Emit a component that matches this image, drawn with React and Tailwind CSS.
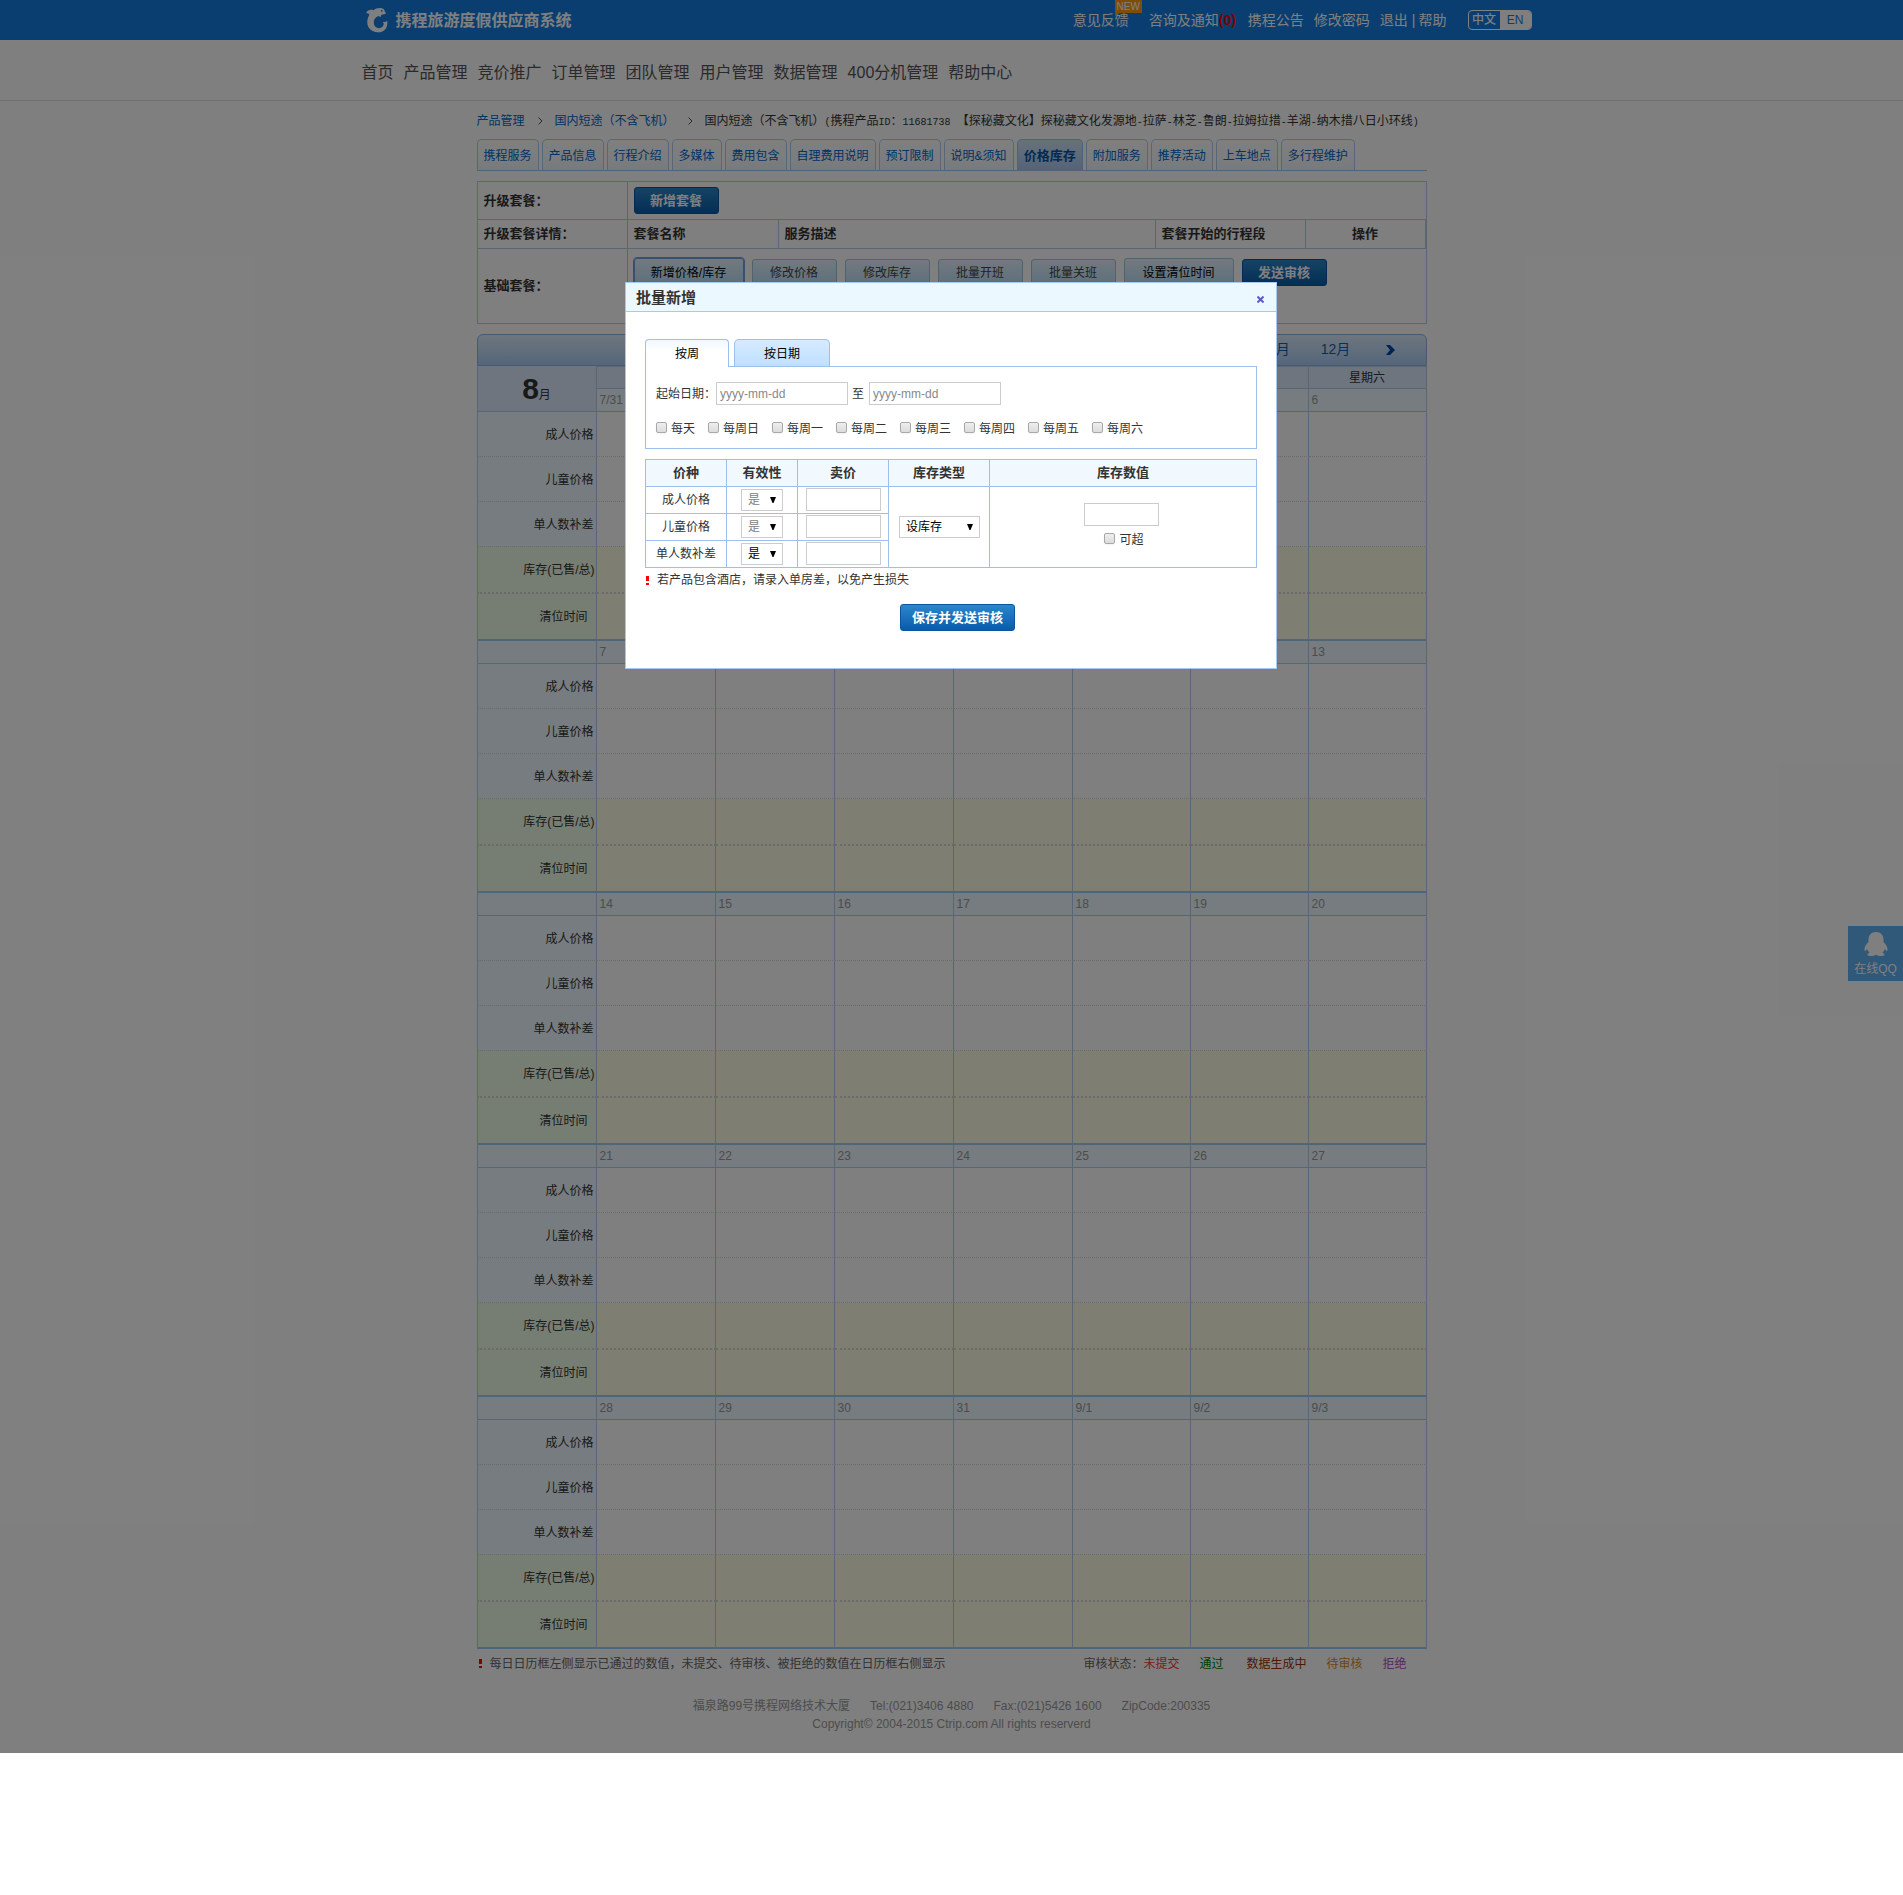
import React from "react";

const topLink = "text-[14px] leading-5 text-white hover:underline";

const menu = ["首页", "产品管理", "竞价推广", "订单管理", "团队管理", "用户管理", "数据管理", "400分机管理", "帮助中心"];

const tabs = [
  "携程服务", "产品信息", "行程介绍", "多媒体", "费用包含", "自理费用说明", "预订限制",
  "说明&须知", "价格库存", "附加服务", "推荐活动", "上车地点", "多行程维护",
];

const weekdays = ["星期日", "星期一", "星期二", "星期三", "星期四", "星期五", "星期六"];

const weeks = [
  ["7/31", "1", "2", "3", "4", "5", "6"],
  ["7", "8", "9", "10", "11", "12", "13"],
  ["14", "15", "16", "17", "18", "19", "20"],
  ["21", "22", "23", "24", "25", "26", "27"],
  ["28", "29", "30", "31", "9/1", "9/2", "9/3"],
];

const line = "border-[#b3cdeb]";

const rows = [
  { label: "成人价格", head: "h-[45px] border-b border-dotted bg-[#ecf8ff] pr-[2px]", cell: "border-b border-dotted" },
  { label: "儿童价格", head: "h-[45px] border-b border-dotted bg-[#ecf8ff] pr-[2px]", cell: "border-b border-dotted" },
  { label: "单人数补差", head: "h-[45px] border-b border-dotted bg-[#ecf8ff] pr-[2px]", cell: "border-b border-dotted" },
  { label: "库存(已售/总)", head: "h-[47px] border-b-2 border-dotted bg-[#ecfae4] pr-px", cell: "border-b-2 border-dotted bg-[#fffde5]" },
  { label: "清位时间", head: "h-[47px] border-b-2 border-b-[#9acdf5] bg-[#ecfae4] pr-2", cell: "border-b-2 border-b-[#9acdf5] bg-[#fffde5]", last: true },
];

function Logo() {
  return (
    <svg width="22" height="25" viewBox="0 0 22 25" className="shrink-0" aria-hidden="true">
      <path
        fill="#fff"
        d="M0 5.300C1 3 2.500 2 4 2C5.500 1.700 6.500 2 7.500 2.200C9 0.800 11.500 0 14 0C17 0 18.600 1.500 18.800 3.500L20 5.300C19 6.500 17 6.500 15.500 6.700C14.800 7.200 15.200 8.200 14.800 9C13.800 8.800 13 8.300 12.300 8C9.800 9 8 11 7.800 13.500C7.500 17 9 19.500 12.300 20.200C15.500 20.500 17.500 18.500 17.800 15.800L16.800 14C18.500 14.300 20 14 21.300 13C21.300 16 21.500 18.500 19.500 21C17.500 23.700 14.500 24.600 11.300 24.300C5.500 23.800 1.500 20 1.300 15C1.200 11.500 2 9 3.500 6.500C2.500 5.500 1.500 5.200 0 5.300Z"
      />
      <circle cx="15.700" cy="2.800" r="0.900" fill="#147ce0" />
    </svg>
  );
}

function Header() {
  return (
    <header>
      <div className="h-10 bg-[#147ce0]">
        <div className="mx-auto flex h-10 max-w-[1180px] items-center justify-between">
          <a href="#home" className="flex items-center gap-2 pl-1 pt-px text-[16px] font-bold text-white">
            <Logo />
            携程旅游度假供应商系统
          </a>
          <nav className="flex items-center pr-[10px]" aria-label="账户">
            <a href="#feedback" className={`${topLink} relative`}>
              意见反馈
              <span className="absolute -top-[10px] left-[42px] flex h-[13px] w-[27px] items-center justify-center bg-[#ff9a10] text-[10px] leading-none">
                NEW
                <svg className="absolute left-0 top-[13px]" width="4" height="3" viewBox="0 0 4 3" aria-hidden="true">
                  <path d="M0 0h4L0 3z" fill="#ff9a10" />
                </svg>
              </span>
            </a>
            <a href="#notice" className={`${topLink} ml-5`}>
              咨询及通知<b className="text-[#f00]">(0)</b>
            </a>
            <a href="#bulletin" className={`${topLink} ml-3`}>携程公告</a>
            <a href="#password" className={`${topLink} ml-[10px]`}>修改密码</a>
            <a href="#logout" className={`${topLink} ml-[10px]`}>退出</a>
            <span className="ml-1 mr-[3px] text-[14px] leading-5 text-white">|</span>
            <a href="#help" className={topLink}>帮助</a>
            <span className="ml-[21px] flex h-5 w-16 overflow-hidden rounded-[4px] border border-white text-[12px] font-medium leading-[18px]">
              <button type="button" className="w-8 text-white">中文</button>
              <button type="button" className="w-8 bg-white text-[#147ce0]">EN</button>
            </span>
          </nav>
        </div>
      </div>
      <div className="h-[61px] border-b border-[#d5e0ea]">
        <nav className="mx-auto flex h-[65px] max-w-[1180px] items-center gap-[10px]" aria-label="主菜单">
          {menu.map((m) => (
            <a key={m} href={`#${m}`} className="text-[16px] leading-6 text-[#555]">{m}</a>
          ))}
        </nav>
      </div>
    </header>
  );
}

function Half({ children }) {
  return <span className="font-['Liberation_Mono',monospace] text-[10px]">{children}</span>;
}

function Chevron() {
  return (
    <svg width="5" height="8" viewBox="0 0 5 8" className="ml-[13px] mr-3 shrink-0" fill="none" stroke="#555" aria-hidden="true">
      <path d="M0.500 0.500L4 4L0.500 7.500" />
    </svg>
  );
}

function Breadcrumb() {
  return (
    <nav className="flex h-[38px] items-center whitespace-nowrap pt-px text-[12px] text-[#333] [text-spacing-trim:space-all]" aria-label="位置">
      <a href="#product" className="text-[#0066cc]">产品管理</a>
      <Chevron />
      <a href="#short" className="text-[#0066cc]">国内短途（不含飞机）</a>
      <Chevron />
      <span>
        国内短途（不含飞机）<Half>(</Half>携程产品<Half>ID</Half>：<Half>11681738 </Half>
        【探秘藏文化】探秘藏文化发源地<Half>-</Half>拉萨<Half>-</Half>林芝<Half>-</Half>鲁朗<Half>-</Half>拉姆拉措<Half>-</Half>羊湖<Half>-</Half>纳木措八日小环线<Half>)</Half>
      </span>
    </nav>
  );
}

function Tabs() {
  return (
    <nav className="flex gap-[3px] border-b border-[#a0c4f0]" aria-label="产品维护">
      {tabs.map((t) =>
        t === "价格库存" ? (
          <a key={t} href="#stock" aria-current="page" className="h-[31px] rounded-t-[5px] border border-b-0 border-[#a3c5ea] bg-linear-to-b from-[#cfe4f5] to-[#a9c7f0] px-[6px] text-[13px] font-bold leading-[31px] text-[#0055aa]">
            {t}
          </a>
        ) : (
          <a key={t} href={`#${t}`} className="h-[31px] rounded-t-[5px] border border-b-0 border-[#b0cdee] bg-linear-to-b from-white to-[#f0f6fb] px-[6px] text-[12px] leading-8 text-[#0066cc]">
            {t}
          </a>
        )
      )}
    </nav>
  );
}

function BlueButton({ children, wide }) {
  return (
    <button
      type="button"
      className={`h-[27px] rounded-[3px] border border-[#0a559f] bg-linear-to-b from-[#2a87ca] to-[#0a5bab] text-[13px] font-bold leading-[25px] text-white ${wide ? "w-[115px]" : "w-[85px]"}`}
    >
      {children}
    </button>
  );
}

const lightBtn = "rounded-t-[3px] border bg-linear-to-b from-[#e6f4ff] to-[#b8ddf5] text-[12px]";

function PackageTable() {
  const th = `border-b border-r ${line} px-[6px] text-left font-bold`;
  return (
    <table className={`mt-[10px] w-full table-fixed border-separate border-spacing-0 border-l border-t ${line} text-[13px] text-[#333]`}>
      <colgroup>
        <col className="w-[150px]" />
        <col className="w-[151px]" />
        <col />
        <col className="w-[150px]" />
        <col className="w-[121px]" />
      </colgroup>
      <tbody>
        <tr className="h-[38px]">
          <th className={th}>升级套餐：</th>
          <td colSpan={4} className={`border-b border-r ${line} px-[6px]`}>
            <div className="flex"><BlueButton>新增套餐</BlueButton></div>
          </td>
        </tr>
        <tr className="h-[29px]">
          <th className={th}>升级套餐详情：</th>
          <th className={th}>套餐名称</th>
          <th className={th}>服务描述</th>
          <th className={th}>套餐开始的行程段</th>
          <th className={`border-b border-r-2 ${line} text-center font-bold`}>操作</th>
        </tr>
        <tr className="h-[75px]">
          <th className={th}>基础套餐：</th>
          <td colSpan={4} className={`border-b border-r ${line} px-[6px] pt-[9px] align-top`}>
            <div className="flex items-start gap-2">
              <button type="button" className={`${lightBtn} h-[29px] w-[110px] border-[#6f9fe0] text-black outline outline-[#6f9fe0]`}>新增价格/库存</button>
              {["修改价格", "修改库存", "批量开班", "批量关班"].map((b) => (
                <button key={b} type="button" className={`${lightBtn} mt-px h-[28px] w-[85px] border-[#9cc4e0] text-[#444]`}>{b}</button>
              ))}
              <button type="button" className={`${lightBtn} h-[29px] w-[110px] border-[#9cc4e0] text-black`}>设置清位时间</button>
              <div className="mt-px"><BlueButton>发送审核</BlueButton></div>
            </div>
          </td>
        </tr>
      </tbody>
    </table>
  );
}

function Calendar() {
  return (
    <section className="mt-[10px]">
      <div className="flex h-8 items-center justify-end rounded-t-[6px] border border-[#8fb4e0] bg-linear-to-b from-[#dcecfb] to-[#abcdf5] pb-px pr-[31px] text-[14px] text-[#1a5cb0]">
        {["9月", "10月", "11月", "12月"].map((m) => (
          <button key={m} type="button" className="w-[60px]">{m}</button>
        ))}
        <button type="button" aria-label="下个月" className="ml-5">
          <svg width="9" height="10" viewBox="0 0 9 10" aria-hidden="true">
            <path d="M0 0h4l5 5-5 5H0l4-5z" fill="#0044b0" />
          </svg>
        </button>
      </div>
      <table className="w-full table-fixed border-separate border-spacing-0 text-[12px] leading-4 text-[#333]">
        <colgroup>
          <col className="w-[120px]" />
          {weekdays.map((d, i) => <col key={d} className={i < 4 ? "w-[119px]" : ""} />)}
        </colgroup>
        <tbody>
          <tr className="h-[23px]">
            <th rowSpan={2} className={`border-x border-b ${line} bg-[#dcebff] font-normal`}>
              <b className="text-[30px] leading-8">8</b>月
            </th>
            {weekdays.map((d) => (
              <th key={d} className={`border-b border-r border-t ${line} bg-[#dcebff] font-normal`}>{d}</th>
            ))}
          </tr>
          {weeks.map((week, w) => (
            <React.Fragment key={w}>
              <tr className="h-[23px]">
                {w > 0 && <td className={`border-x border-b ${line} bg-[#ecf8ff]`} />}
                {week.map((d) => (
                  <td key={d} className={`border-b border-r ${line} bg-[#ecf8ff] px-[3px] text-[#999]`}>{d}</td>
                ))}
              </tr>
              {rows.map((r) => (
                <tr key={r.label}>
                  <th className={`border-x border-x-[#b3cdeb] pt-px text-right font-normal ${r.head} ${r.last ? "" : "border-b-[#d6d6d6]"} [border-left-style:solid] [border-right-style:solid]`}>
                    {r.label}
                  </th>
                  {week.map((d) => (
                    <td key={d} className={`border-r border-r-[#b3cdeb] ${r.cell} ${r.last ? "" : "border-b-[#d6d6d6]"} [border-right-style:solid]`} />
                  ))}
                </tr>
              ))}
            </React.Fragment>
          ))}
        </tbody>
      </table>
      <div className="flex h-[29px] items-center justify-between pr-5 text-[12px] text-[#666]">
        <p className="flex items-center gap-2 pl-[2px]">
          <Bang />每日日历框左侧显示已通过的数值，未提交、待审核、被拒绝的数值在日历框右侧显示
        </p>
        <p className="flex">
          审核状态：
          <span className="mr-5 text-[#f33]">未提交</span>
          <a href="#passed" className="mr-[23px] text-[#008000]">通过</a>
          <span className="mr-5 text-[#993300]">数据生成中</span>
          <span className="mr-5 text-[#e08a20]">待审核</span>
          <span className="text-[#b04cc0]">拒绝</span>
        </p>
      </div>
    </section>
  );
}

function Bang() {
  return (
    <svg width="3" height="9" viewBox="0 0 3 9" className="shrink-0" aria-hidden="true">
      <path d="M0 0h3v5H0zM0 7h3v2H0z" fill="#f00" />
    </svg>
  );
}

const field = "h-[23px] border border-[#ccc] bg-white px-[3px] text-[12px] outline-none placeholder:text-[#888]";

function Check({ label }) {
  return (
    <label className="flex items-start gap-1">
      <input type="checkbox" className="size-[11px] appearance-none rounded-[2px] border border-[#a8a8a8] bg-linear-to-b from-[#eee] to-[#dcdcdc] shadow-xs checked:bg-[#4a90d9]" />
      <span className="leading-[14px]">{label}</span>
    </label>
  );
}

function Select({ label, options, disabled, wide }) {
  return (
    <span className="relative inline-block align-middle">
      <select
        aria-label={label}
        disabled={disabled}
        className={`block h-[22px] appearance-none border border-[#ccc] bg-white pl-[6px] text-[12px] leading-5 text-black disabled:text-[#808080] disabled:opacity-100 ${wide ? "w-[81px]" : "w-[42px]"}`}
      >
        {options.map((o) => <option key={o}>{o}</option>)}
      </select>
      <svg width="6" height="6" viewBox="0 0 6 6" className="pointer-events-none absolute right-[7px] top-2" aria-hidden="true">
        <path d="M0 0h6L3.500 6h-1z" fill="#000" />
      </svg>
    </span>
  );
}

function Dialog() {
  const cell = "border-b border-r border-[#9dbfee]";
  const prices = [
    ["成人价格", true],
    ["儿童价格", true],
    ["单人数补差", false],
  ];
  return (
    <div role="dialog" aria-labelledby="dlg-title" className="w-[652px] border border-[#a8c8f0] bg-white text-[12px] leading-4 text-[#333]">
      <div className="flex h-[29px] items-center justify-between border-b border-[#a8c8f0] bg-[#ecf8ff] pl-[10px] pr-3 pt-[2px]">
        <h2 id="dlg-title" className="text-[15px] font-bold">批量新增</h2>
        <button type="button" aria-label="关闭">
          <svg width="7" height="7" viewBox="0 0 7 7" className="mt-[2px]" stroke="#5a5ac8" strokeWidth="2" aria-hidden="true">
            <path d="M0.500 0.500L6.500 6.500M6.500 0.500L0.500 6.500" />
          </svg>
        </button>
      </div>
      <div className="px-[19px] pb-[37px] pt-[27px]">
        <div role="tablist" className="flex gap-[5px] text-black">
          <button role="tab" aria-selected="true" type="button" className="z-10 -mb-px h-[28px] w-[84px] rounded-t-[4px] border border-b-0 border-[#9dbfee] bg-linear-to-b from-[#f0f8ff] to-white to-40%">按周</button>
          <button role="tab" aria-selected="false" type="button" className="h-[27px] w-[96px] rounded-t-[5px] border border-b-0 border-[#9dbfee] bg-linear-to-b from-[#d8eaff] to-[#bde0ff] pt-px">按日期</button>
        </div>
        <div className="h-[83px] border border-[#9dbfee] px-[10px] pt-[15px]">
          <div className="flex items-center">
            <label htmlFor="from" className="w-[60px] whitespace-nowrap">起始日期：</label>
            <input id="from" type="text" placeholder="yyyy-mm-dd" className={`${field} w-[132px]`} />
            <label htmlFor="to" className="mx-1 w-3">至</label>
            <input id="to" type="text" placeholder="yyyy-mm-dd" className={`${field} ml-px w-[132px]`} />
          </div>
          <div className="mt-[17px] flex gap-[13px]">
            {["每天", "每周日", "每周一", "每周二", "每周三", "每周四", "每周五", "每周六"].map((d) => (
              <Check key={d} label={d} />
            ))}
          </div>
        </div>
        <table className="mt-[10px] w-full table-fixed border-separate border-spacing-0 border-l border-t border-[#9dbfee] text-center">
          <colgroup>
            <col className="w-[81px]" />
            <col className="w-[71px]" />
            <col className="w-[91px]" />
            <col className="w-[101px]" />
            <col />
          </colgroup>
          <thead>
            <tr className="h-[27px] bg-[#f1f9ff] text-[13px]">
              {["价种", "有效性", "卖价", "库存类型", "库存数值"].map((h) => (
                <th key={h} scope="col" className={`${cell} font-bold`}>{h}</th>
              ))}
            </tr>
          </thead>
          <tbody>
            {prices.map(([name, disabled], i) => (
              <tr key={name} className="h-[27px]">
                <td className={cell}>{name}</td>
                <td className={cell}><Select label={`${name}有效性`} options={["是", "否"]} disabled={disabled} /></td>
                <td className={`${cell} pb-px pl-px`}><input type="text" aria-label={`${name}卖价`} className={`${field} block mx-auto w-[75px]`} /></td>
                {i === 0 && (
                  <>
                    <td rowSpan={3} className={`${cell} pl-px`}><Select label="库存类型" options={["设库存", "不限"]} wide /></td>
                    <td rowSpan={3} className={cell}>
                      <div className="flex flex-col items-center gap-[7px] pb-1 pr-[3px]">
                        <input type="text" aria-label="库存数值" className={`${field} w-[75px]`} />
                        <div className="pl-[5px]"><Check label="可超" /></div>
                      </div>
                    </td>
                  </>
                )}
              </tr>
            ))}
          </tbody>
        </table>
        <p className="mt-1 flex items-center gap-2 pl-px"><Bang />若产品包含酒店，请录入单房差，以免产生损失</p>
        <div className="mt-4 flex justify-center pl-[13px]"><BlueButton wide>保存并发送审核</BlueButton></div>
      </div>
    </div>
  );
}

export default function App() {
  return (
    <div className="relative bg-white font-['Liberation_Sans','Noto_Sans_CJK_SC',sans-serif]">
      <Header />
      <main className="mx-auto max-w-[950px]">
        <Breadcrumb />
        <Tabs />
        <PackageTable />
        <Calendar />
      </main>
      <footer className="pb-5 pt-[19px] text-center text-[12px] leading-[18px] text-[#999]">
        <p className="flex justify-center gap-5">
          <span>福泉路99号携程网络技术大厦</span>
          <span>Tel:(021)3406 4880</span>
          <span>Fax:(021)5426 1600</span>
          <span>ZipCode:200335</span>
        </p>
        <p>Copyright© 2004-2015 Ctrip.com All rights reserverd</p>
      </footer>
      <a href="#qq" className="absolute right-0 top-[926px] flex size-[55px] flex-col items-center bg-[#60b0f0] pt-[6px] text-[12px] leading-5 text-white">
        <svg width="24" height="24" viewBox="0 0 24 24" fill="#fff" className="mb-[3px]" aria-hidden="true">
          <path d="M12 0C7.500 0 4.500 3 4.500 7.500V10C2.500 12 0 15 0.500 18.500C1.500 19.500 2.500 18 3.300 17C3.800 18.800 4.600 20 5.500 20.800C3.800 21.500 3.200 22.500 3.500 23.300C5 24.300 10 24.300 12 22.800C14 24.300 19 24.300 20.500 23.300C20.800 22.500 20.200 21.500 18.500 20.800C19.400 20 20.200 18.800 20.700 17C21.500 18 22.500 19.500 23.500 18.500C24 15 21.500 12 19.500 10V7.500C19.500 3 16.500 0 12 0Z" />
        </svg>
        在线QQ
      </a>
      <div className="absolute inset-0 bg-black/50" />
      <div className="absolute inset-x-0 top-[282px] flex justify-center pr-px">
        <Dialog />
      </div>
    </div>
  );
}
